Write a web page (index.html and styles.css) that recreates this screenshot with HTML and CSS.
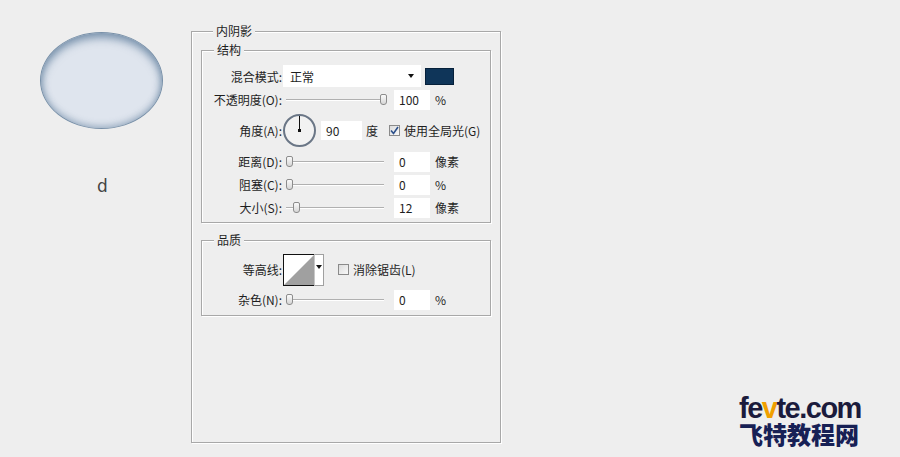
FILE: index.html
```html
<!DOCTYPE html>
<html lang="zh-CN">
<head>
    <meta charset="UTF-8">
    <title>内阴影</title>
    <link rel="stylesheet" href="styles.css">
</head>
<body>

    <div class="preview">
        <div class="ellipse"></div>
        <div class="caption">d</div>
    </div>

    <fieldset class="panel">
        <legend>内阴影</legend>

        <fieldset class="group group-structure">
            <legend>结构</legend>

            <div class="row row-blend">
                <span class="lbl">混合模式:</span>
                <div class="select"><span>正常</span><span class="caret"></span></div>
                <div class="swatch"></div>
            </div>

            <div class="row row-slider">
                <span class="lbl">不透明度(O):</span>
                <div class="slider"><span class="thumb" style="left: 94px"></span></div>
                <div class="num">100</div>
                <span class="unit">%</span>
            </div>

            <div class="row row-angle">
                <span class="lbl">角度(A):</span>
                <div class="dial"><span class="hand"></span><span class="dot"></span></div>
                <div class="num num-angle">90</div>
                <span class="unit unit-deg">度</span>
                <span class="check checked">
                    <svg width="9" height="9" viewBox="0 0 9 9"><path d="M1 4.5 L3.5 7.5 L8 1" fill="none" stroke="#2b4f8a" stroke-width="1.6"/></svg>
                </span>
                <span class="check-label">使用全局光(G)</span>
            </div>

            <div class="row row-slider">
                <span class="lbl">距离(D):</span>
                <div class="slider"><span class="thumb" style="left: 0px"></span></div>
                <div class="num">0</div>
                <span class="unit">像素</span>
            </div>

            <div class="row row-slider">
                <span class="lbl">阻塞(C):</span>
                <div class="slider"><span class="thumb" style="left: 0px"></span></div>
                <div class="num">0</div>
                <span class="unit">%</span>
            </div>

            <div class="row row-slider">
                <span class="lbl">大小(S):</span>
                <div class="slider"><span class="thumb" style="left: 7px"></span></div>
                <div class="num">12</div>
                <span class="unit">像素</span>
            </div>
        </fieldset>

        <fieldset class="group group-quality">
            <legend>品质</legend>

            <div class="row row-contour">
                <span class="lbl">等高线:</span>
                <div class="contour">
                    <div class="contour-preview">
                        <svg width="30" height="30" viewBox="0 0 30 30"><polygon points="0,30 30,0 30,30" fill="#a0a0a0"/></svg>
                    </div>
                    <div class="contour-drop"><span class="caret"></span></div>
                </div>
                <span class="check check-aa"></span>
                <span class="check-label">消除锯齿(L)</span>
            </div>

            <div class="row row-slider">
                <span class="lbl">杂色(N):</span>
                <div class="slider"><span class="thumb" style="left: 0px"></span></div>
                <div class="num">0</div>
                <span class="unit">%</span>
            </div>
        </fieldset>
    </fieldset>

    <div class="brand">
        <div class="brand-site">fe<span class="brand-v">v</span>te.com</div>
        <div class="brand-name">飞特教程网</div>
    </div>

</body>
</html>
```

FILE: styles.css
```css
/* General Styles */
body {
    margin: 0;
    width: 900px;
    height: 457px;
    background-color: #eeeeee;
    font-family: "Noto Sans CJK SC", "Noto Sans", sans-serif;
    font-size: 12px;
    color: #1e1e1e;
    display: flex;
    overflow: hidden;
}

/* Left preview */
.preview {
    width: 191px;
    padding: 32px 0 0 40px;
    box-sizing: border-box;
    flex-shrink: 0;
}

.ellipse {
    width: 123px;
    height: 97px;
    border-radius: 50%;
    box-sizing: border-box;
    border: 1px solid #7890a8;
    background-color: #dfe5ee;
    box-shadow: inset 0 5px 9px rgba(70, 105, 140, 0.6),
                inset 0 -2px 7px rgba(70, 105, 140, 0.4);
}

.caption {
    width: 123px;
    margin-top: 47px;
    padding-left: 2px;
    box-sizing: border-box;
    text-align: center;
    font-family: "DejaVu Sans", sans-serif;
    font-size: 17px;
    color: #444;
    line-height: 20px;
}

/* Panels */
fieldset {
    margin: 0;
    border: 1px solid #a8a8a8;
    box-shadow: inset 1px 1px 0 #fff, 1px 1px 0 #fff;
}

legend {
    line-height: 16px;
    padding: 0 3px;
    background-color: #eeeeee;
}

.panel {
    width: 310px;
    height: 420px;
    margin-top: 23px;
    padding: 3px 9px 0 9px;
    box-sizing: border-box;
    flex-shrink: 0;
}

.panel > legend {
    margin-left: 12px;
}

.group {
    padding: 7px 0 3px 0;
}

.group > legend {
    margin-left: 12px;
}

.group-quality {
    margin-top: 9px;
    padding-top: 5px;
    padding-bottom: 4px;
}

/* Rows */
.row {
    display: flex;
    align-items: center;
    height: 23px;
}

.row-blend {
    height: 22px;
    margin-bottom: 1px;
}

.row-angle {
    height: 35px;
    margin: 2px 0 2px;
}

.row-contour {
    height: 33px;
    margin-bottom: 2px;
}

.lbl {
    width: 80px;
    text-align: right;
    white-space: nowrap;
    flex-shrink: 0;
}

/* Blend mode select */
.select {
    margin-left: 1px;
    width: 138px;
    height: 22px;
    background-color: #fff;
    display: flex;
    align-items: center;
    justify-content: space-between;
    padding: 0 7px 0 7px;
    box-sizing: border-box;
}

.caret {
    width: 0;
    height: 0;
    border-left: 3px solid transparent;
    border-right: 3px solid transparent;
    border-top: 4px solid #111;
}

.swatch {
    margin-left: 4px;
    width: 29px;
    height: 17px;
    box-sizing: border-box;
    background-color: #0f3559;
    border: 1px solid #06203a;
}

/* Sliders */
.slider {
    position: relative;
    margin-left: 4px;
    width: 101px;
    height: 14px;
}

.slider::before {
    content: "";
    position: absolute;
    left: 0;
    right: 3px;
    top: 6px;
    height: 1px;
    background-color: #b0b0b0;
    box-shadow: 0 1px 0 #fff;
}

.thumb {
    position: absolute;
    top: 1px;
    width: 7px;
    height: 11px;
    box-sizing: border-box;
    border: 1px solid #8c8c8c;
    border-radius: 2px 2px 3px 3px;
    background: linear-gradient(#fafafa, #d6d6d6);
}

.num {
    margin-left: 7px;
    width: 36px;
    height: 20px;
    line-height: 20px;
    padding-left: 5px;
    box-sizing: border-box;
    background-color: #fff;
}

.unit {
    margin-left: 5px;
}

/* Angle */
.dial {
    position: relative;
    margin-left: 1px;
    width: 33px;
    height: 33px;
    box-sizing: border-box;
    border: 2px solid #6a7686;
    border-radius: 50%;
    background-color: #f2f2f2;
}

.hand {
    position: absolute;
    left: 14px;
    top: 0;
    width: 1px;
    height: 15px;
    background-color: #111;
}

.dot {
    position: absolute;
    left: 13px;
    top: 13px;
    width: 3px;
    height: 3px;
    background-color: #111;
}

.num-angle {
    margin-left: 5px;
    width: 41px;
    height: 19px;
    line-height: 19px;
}

.unit-deg {
    margin-left: 4px;
}

/* Checkboxes */
.check {
    margin-left: 11px;
    width: 11px;
    height: 11px;
    box-sizing: border-box;
    border: 1px solid #8a8a8a;
    background: linear-gradient(135deg, #dcdcdc, #f8f8f8);
    display: flex;
    align-items: center;
    justify-content: center;
}

.check-label {
    margin-left: 4px;
    white-space: nowrap;
}

.check-aa {
    margin-left: 14px;
}

/* Contour */
.contour {
    margin-left: 1px;
    display: flex;
    height: 32px;
}

.contour-preview {
    width: 31px;
    height: 32px;
    box-sizing: border-box;
    border: 1px solid #111;
    border-right: none;
    background-color: #fff;
}

.contour-preview svg {
    display: block;
}

.contour-drop {
    width: 10px;
    height: 32px;
    box-sizing: border-box;
    border: 1px solid #a0a0a0;
    border-left: 1px solid #c8c8c8;
    background-color: #fff;
    display: flex;
    justify-content: center;
    padding-top: 10px;
}

/* Brand */
.brand {
    flex: 1;
    display: flex;
    flex-direction: column;
    align-items: flex-end;
    justify-content: flex-end;
    padding: 0 40px 10px 0;
    font-family: "Liberation Sans", Arial, sans-serif;
    font-weight: bold;
    color: #1b1b3c;
}

.brand-site {
    font-size: 29px;
    line-height: 26px;
    letter-spacing: -1.5px;
    width: 121px;
}

.brand-v {
    color: #f0a000;
}

.brand-name {
    font-family: "Noto Sans CJK SC", sans-serif;
    font-weight: 900;
    font-size: 24px;
    line-height: 26px;
    color: #172055;
    width: 121px;
}
```
